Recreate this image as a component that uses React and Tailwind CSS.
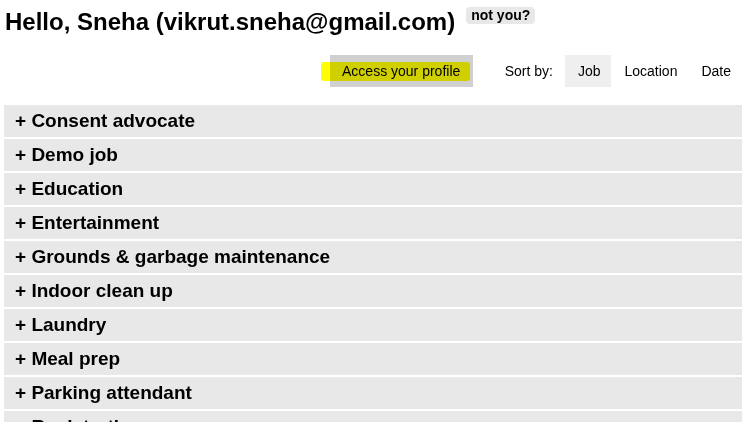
import React from 'react';

const jobs = [
  'Consent advocate',
  'Demo job',
  'Education',
  'Entertainment',
  'Grounds & garbage maintenance',
  'Indoor clean up',
  'Laundry',
  'Meal prep',
  'Parking attendant',
  'Registration',
];

const SortButton = ({ label, active }) => (
  <button
    className={`h-8 pl-[13px] pr-[11px] text-[14px] text-black ${active ? 'bg-[#efefef]' : 'bg-transparent'}`}
  >
    {label}
  </button>
);

export default function App() {
  return (
    <div className="w-[744px] h-[422px] overflow-hidden bg-white font-['Liberation_Sans',Arial,sans-serif] text-black">
      <div className="flex items-start pl-[5px] pt-[6px]">
        <h1 className="text-[24px] font-bold leading-[32px]">
          Hello, Sneha (vikrut.sneha@gmail.com)
        </h1>
        <span className="ml-[11px] mt-[1px] rounded-[4px] bg-[#e8e8e8] px-[5px] text-[14px] font-bold leading-[17px]">
          not you?
        </span>
      </div>

      <div className="mt-[17px] flex items-center justify-end pr-[2px]">
        <div className="relative">
          <button className="h-8 w-[143px] bg-[#d0d0d0] text-[14px] text-black">
            Access your profile
          </button>
          <span className="pointer-events-none absolute left-[-9px] top-[7px] h-[19px] w-[149px] rounded-[3px] bg-[#ffff00] mix-blend-multiply" />
        </div>
        <span className="ml-[32px] mr-[12px] text-[14px]">Sort by:</span>
        <SortButton label="Job" active />
        <SortButton label="Location" />
        <SortButton label="Date" />
      </div>

      <div className="mt-[18px] flex flex-col gap-[2px] pl-[4px] pr-[2px]">
        {jobs.map((job) => (
          <div
            key={job}
            className="h-8 shrink-0 flex items-center bg-[#e8e8e8] pl-[11px] text-[19px] font-bold"
          >
            + {job}
          </div>
        ))}
      </div>
    </div>
  );
}
